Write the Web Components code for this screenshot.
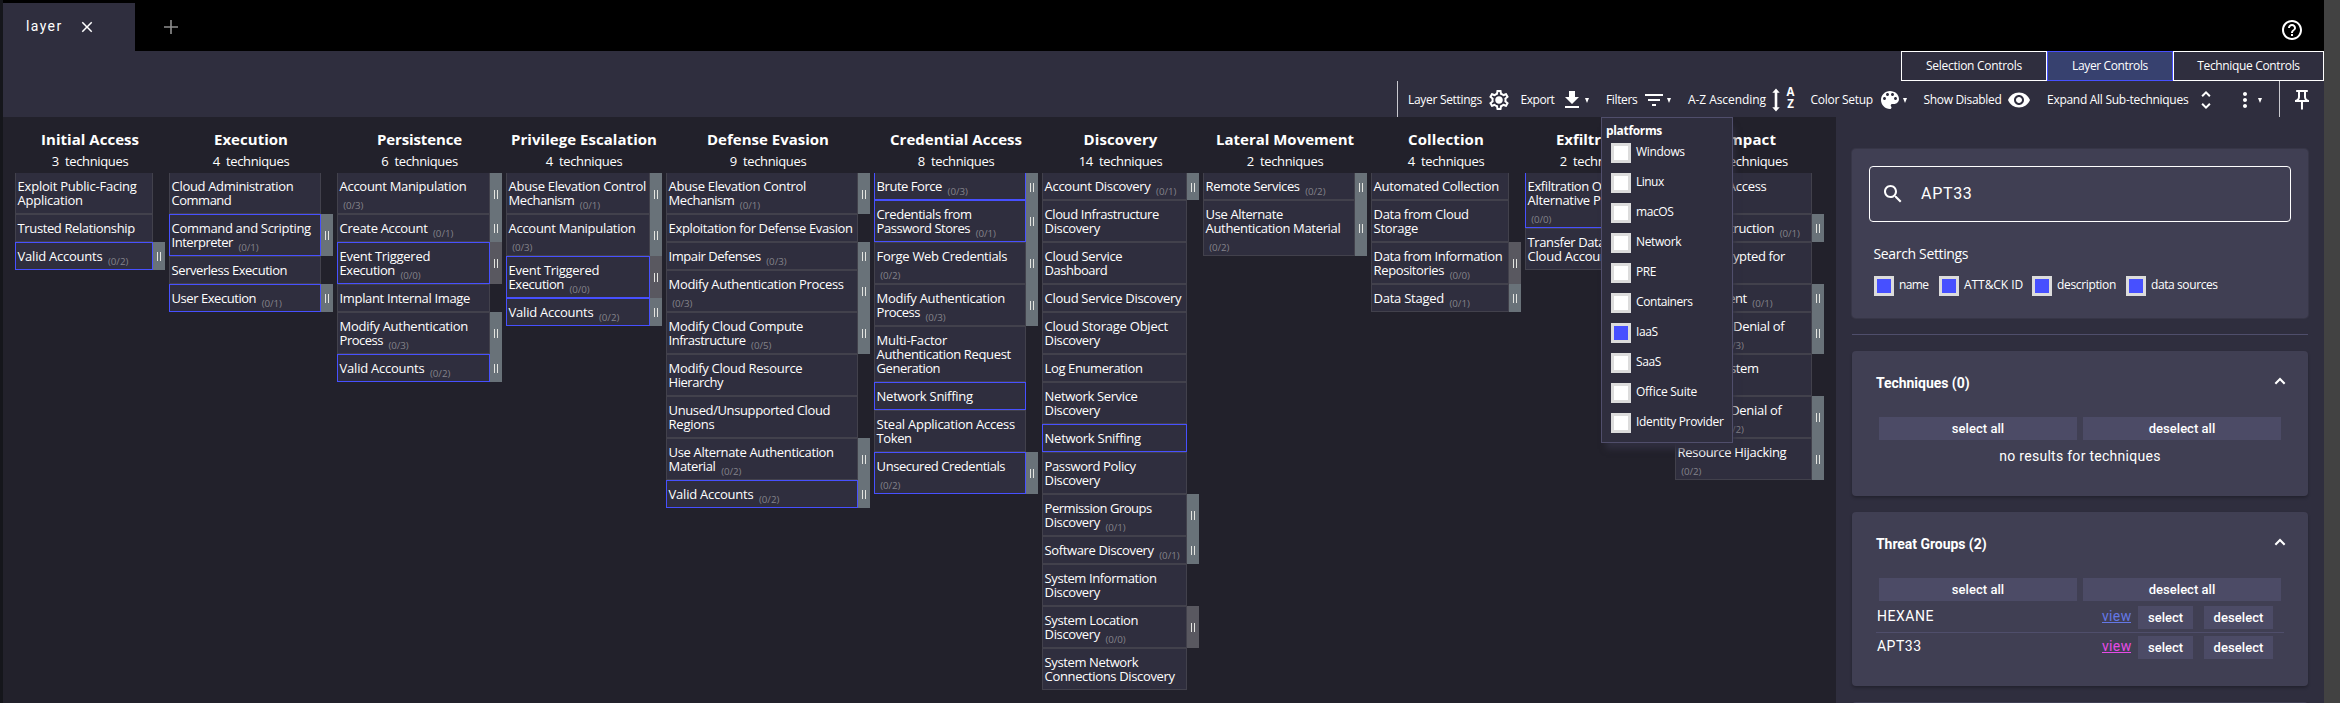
<!DOCTYPE html>
<html lang="en">
<head>
<meta charset="utf-8">
<title>ATT&amp;CK Navigator</title>
<style>
html,body{margin:0;height:703px;overflow:hidden;background:#22212b;color:#fff;font-family:"Open Sans","Noto Sans",sans-serif;font-size:13px}
</style>
</head>
<body>
<nav-app></nav-app>
<script>
const tpl = (html) => { const t = document.createElement('template'); t.innerHTML = html; return t; };
class Base extends HTMLElement {
  constructor() { super(); this.attachShadow({ mode: 'open' }); }
  connectedCallback() { this.shadowRoot.replaceChildren(tpl(this.render()).content.cloneNode(true)); }
  a(n, d = '') { return this.getAttribute(n) ?? d; }
}

/* Advance widths (units per 2048 em) of the interface typeface, used to space the labels. */
const ADV = {' ':561,a:1042,b:1204,c:946,d:1206,e:1071,f:641,g:1206,h:1158,i:496,j:496,k:1018,l:496,m:1764,n:1158,o:1200,p:1204,q:1206,r:712,s:869,t:694,u:1158,v:981,w:1480,x:940,y:990,z:926,A:1321,B:1174,C:1268,D:1436,E:1036,F:999,G:1406,H:1454,I:545,J:731,K:1188,L:963,M:1839,N:1532,O:1544,P:1147,Q:1544,R:1225,S:1087,T:1073,U:1407,V:1272,W:1913,X:1208,Y:1133,Z:1168,'(':618,')':618,'/':797,'-':819,'&':1638};
const ctx = document.createElement('canvas').getContext('2d');
/* <ui-text>: one line of text with even tracking; w = target width, size, weight, family. */
class UiText extends Base {
  render() {
    const text = this.textContent, size = +this.a('size', 13), weight = this.a('weight', '400');
    const fam = this.a('family', 'Open Sans');
    ctx.font = `${weight} ${size}px "${fam}"`;
    const want = this.hasAttribute('w') ? +this.a('w') : [...text].reduce((s, c) => s + (ADV[c] ?? 1104), 0) / 2048 * size;
    const ls = ((want - ctx.measureText(text).width) / text.length).toFixed(3);
    return `<style>:host{display:inline-block;white-space:pre;font:${weight} ${size}px/var(--lh,14px) "${fam}","Noto Sans",sans-serif;letter-spacing:${ls}px}</style><slot></slot>`;
  }
}
customElements.define('ui-text', UiText);

const ICONS = {
  settings: 'M19.43 12.98c.04-.32.07-.64.07-.98 0-.34-.03-.66-.07-.98l2.11-1.65c.19-.15.24-.42.12-.64l-2-3.46c-.09-.16-.26-.25-.44-.25-.06 0-.12.01-.17.03l-2.49 1c-.52-.4-1.08-.73-1.69-.98l-.38-2.65C14.46 2.18 14.25 2 14 2h-4c-.25 0-.46.18-.49.42l-.38 2.65c-.61.25-1.17.59-1.69.98l-2.49-1c-.06-.02-.12-.03-.18-.03-.17 0-.34.09-.43.25l-2 3.46c-.13.22-.07.49.12.64l2.11 1.65c-.04.32-.07.65-.07.98 0 .33.03.66.07.98l-2.11 1.65c-.19.15-.24.42-.12.64l2 3.46c.09.16.26.25.44.25.06 0 .12-.01.17-.03l2.49-1c.52.4 1.08.73 1.69.98l.38 2.65c.03.24.24.42.49.42h4c.25 0 .46-.18.49-.42l.38-2.65c.61-.25 1.17-.59 1.69-.98l2.49 1c.06.02.12.03.18.03.17 0 .34-.09.43-.25l2-3.46c.12-.22.07-.49-.12-.64l-2.11-1.65zm-1.98-1.71c.04.31.05.52.05.73 0 .21-.02.43-.05.73l-.14 1.13.89.7 1.08.84-.7 1.21-1.27-.51-1.04-.42-.9.68c-.43.32-.84.56-1.25.73l-1.06.43-.16 1.13-.2 1.35h-1.4l-.19-1.35-.16-1.13-1.06-.43c-.43-.18-.83-.41-1.23-.71l-.91-.7-1.06.43-1.27.51-.7-1.21 1.08-.84.89-.7-.14-1.13c-.03-.31-.05-.54-.05-.74s.02-.43.05-.73l.14-1.13-.89-.7-1.08-.84.7-1.21 1.27.51 1.04.42.9-.68c.43-.32.84-.56 1.25-.73l1.06-.43.16-1.13.2-1.35h1.39l.19 1.35.16 1.13 1.06.43c.43.18.83.41 1.23.71l.91.7 1.06-.43 1.27-.51.7 1.21-1.07.85-.89.7.14 1.13zM12 8.200c-2.100 0-3.800 1.700-3.800 3.800s1.700 3.800 3.800 3.800 3.800-1.700 3.800-3.800-1.700-3.800-3.800-3.800z',
  download: 'M19 9h-4V3H9v6H5l7 7 7-7zM5 18v2h14v-2H5z',
  filter: 'M10 18h4v-2h-4v2zM3 6v2h18V6H3zm3 7h12v-2H6v2z',
  palette: 'M12 3c-4.97 0-9 4.03-9 9s4.03 9 9 9c.83 0 1.5-.67 1.5-1.5 0-.39-.15-.74-.39-1.01-.23-.26-.38-.61-.38-.99 0-.83.67-1.5 1.5-1.5H16c2.76 0 5-2.24 5-5 0-4.42-4.03-8-9-8zm-5.5 9c-.83 0-1.5-.67-1.5-1.5S5.67 9 6.5 9 8 9.67 8 10.5 7.33 12 6.5 12zm3-4C8.67 8 8 7.33 8 6.5S8.67 5 9.5 5s1.5.67 1.5 1.5S10.33 8 9.5 8zm5 0c-.83 0-1.5-.67-1.5-1.5S13.67 5 14.5 5s1.5.67 1.5 1.5S15.33 8 14.5 8zm3 4c-.83 0-1.5-.67-1.5-1.5S16.67 9 17.5 9s1.5.67 1.5 1.5-.67 1.5-1.5 1.5z',
  eye: 'M12 4.5C7 4.5 2.73 7.61 1 12c1.73 4.39 6 7.5 11 7.5s9.27-3.11 11-7.5c-1.73-4.39-6-7.5-11-7.5zM12 17c-2.76 0-5-2.24-5-5s2.24-5 5-5 5 2.24 5 5-2.24 5-5 5zm0-8c-1.66 0-3 1.34-3 3s1.34 3 3 3 3-1.34 3-3-1.34-3-3-3z',
  unfold: 'M12 5.83L15.17 9l1.41-1.41L12 3 7.41 7.59 8.83 9 12 5.83zm0 12.34L8.83 15l-1.41 1.41L12 21l4.59-4.59L15.17 15 12 18.17z',
  more: 'M12 8c1.1 0 2-.9 2-2s-.9-2-2-2-2 .9-2 2 .9 2 2 2zm0 2c-1.1 0-2 .9-2 2s.9 2 2 2 2-.9 2-2-.9-2-2-2zm0 6c-1.1 0-2 .9-2 2s.9 2 2 2 2-.9 2-2-.9-2-2-2z',
  pin: 'M14 4v5c0 1.12.37 2.16 1 3H9c.65-.86 1-1.9 1-3V4h4m3-2H7c-.55 0-1 .45-1 1s.45 1 1 1h1v5c0 1.66-1.34 3-3 3v2h5.97v7l1 1 1-1v-7H19v-2c-1.66 0-3-1.34-3-3V4h1c.55 0 1-.45 1-1s-.45-1-1-1z',
  help: 'M11 18h2v-2h-2v2zm1-16C6.48 2 2 6.48 2 12s4.48 10 10 10 10-4.48 10-10S17.52 2 12 2zm0 18c-4.41 0-8-3.59-8-8s3.59-8 8-8 8 3.59 8 8-3.59 8-8 8zm0-14c-2.21 0-4 1.79-4 4h2c0-1.1.9-2 2-2s2 .9 2 2c0 2-3 1.75-3 5h2c0-2.25 3-2.5 3-5 0-2.21-1.79-4-4-4z',
  search: 'M15.5 14h-.79l-.28-.27C15.41 12.59 16 11.11 16 9.5 16 5.91 13.09 3 9.5 3S3 5.91 3 9.5 5.91 16 9.5 16c1.61 0 3.09-.59 4.23-1.57l.27.28v.79l5 4.99L20.49 19l-4.99-5zm-6 0C7.01 14 5 11.99 5 9.5S7.01 5 9.5 5 14 7.01 14 9.5 11.99 14 9.5 14z',
  close: 'M19 6.41 17.59 5 12 10.59 6.41 5 5 6.41 10.59 12 5 17.59 6.41 19 12 13.41 17.59 19 19 17.59 13.41 12z',
  plus: 'M11.2 5h1.6v6.2H19v1.6h-6.2V19h-1.6v-6.2H5v-1.6h6.2z',
  chevron: 'M12 8.5l-5.4 5.4 1.5 1.5 3.9-3.9 3.9 3.9 1.5-1.5z',
  updown: 'M12 .5l3.7 4.2h-2.4v14.6h2.4L12 23.5l-3.7-4.2h2.4V4.7H8.3z'
};
class UiIcon extends Base {
  render() {
    const s = this.a('size', 24), n = this.a('name');
    return `<style>:host{display:block;width:${s}px;height:${s}px}svg{display:block;fill:currentColor}</style><svg width="${s}" height="${s}" viewBox="0 0 24 24"><path d="${ICONS[n]}"/></svg>`;
  }
}
customElements.define('ui-icon', UiIcon);

class UiCheck extends Base {
  render() {
    return `<style>:host{display:flex;align-items:flex-start}i{box-sizing:border-box;width:20px;height:20px;border:3px solid #dcdcdc;background:${this.hasAttribute('on') ? '#4750ff' : '#fff'};margin-right:5px}ui-text{--lh:16px;margin-top:var(--dy,1px)}</style><i></i><ui-text size="12">${this.a('label').replace('&', '&amp;')}</ui-text>`;
  }
}
customElements.define('ui-check', UiCheck);

class TechniqueCell extends Base {
  render() {
    const lines = this.a('lines').split('|'), n = this.a('n'), own = this.hasAttribute('own');
    const h = 14 * (lines.length + (own ? 1 : 0)) + 14;
    const sub = n ? `<ui-text class="n" size="9.75">(0/${n})</ui-text>` : '';
    const body = lines.map((l, i) => `<div><ui-text>${l}</ui-text>${!own && i === lines.length - 1 ? sub : ''}</div>`).join('') + (own ? `<div class="own">${sub}</div>` : '');
    return `<style>
      :host{display:flex;height:${h}px}
      .c{box-sizing:border-box;width:var(--cw);height:100%;border:1px solid #42414c;background:#2f2e3e;padding:6px 0 0 1.6px}
      :host([hit]) .c{border-color:#4750ff}
      :host([first]){height:${h - 1}px;margin-top:1px}
      :host([first]) .c{border-top:0}
      .c>div{height:14px;display:flex}
      .n{color:#84838a;margin-left:5.6px;position:relative;top:6px}
      .own .n{margin-left:3.6px}
      .h{width:12px;display:flex;align-items:center;justify-content:center;background:${n === '0' ? '#595860' : '#697279'}}
      .h i{width:2px;height:9px;border:solid #e3e4e0;border-width:0 1px;margin-top:1px}
    </style><div class="c">${body}</div>${n ? '<div class="h"><i></i></div>' : ''}`;
  }
}
customElements.define('technique-cell', TechniqueCell);

/* cells: [lines separated by |, sub-technique count, flags: h = highlighted, o = count on its own line] */
const COLUMNS = [
  { name: 'Initial Access', w: 138, tw: 97, cells: [['Exploit Public-Facing|Application'], ['Trusted Relationship'], ['Valid Accounts', 2, 'h']] },
  { name: 'Execution', w: 152, tw: 73, cells: [['Cloud Administration|Command'], ['Command and Scripting|Interpreter', 1, 'h'], ['Serverless Execution'], ['User Execution', 1, 'h']] },
  { name: 'Persistence', w: 153, tw: 84, cells: [['Account Manipulation', 3, 'o'], ['Create Account', 1], ['Event Triggered|Execution', 0, 'h'], ['Implant Internal Image'], ['Modify Authentication|Process', 3], ['Valid Accounts', 2, 'h']] },
  { name: 'Privilege Escalation', w: 144, tw: 145, cells: [['Abuse Elevation Control|Mechanism', 1], ['Account Manipulation', 3, 'o'], ['Event Triggered|Execution', 0, 'h'], ['Valid Accounts', 2, 'h']] },
  { name: 'Defense Evasion', w: 192, tw: 121, cells: [['Abuse Elevation Control|Mechanism', 1], ['Exploitation for Defense Evasion'], ['Impair Defenses', 3], ['Modify Authentication Process', 3, 'o'], ['Modify Cloud Compute|Infrastructure', 5], ['Modify Cloud Resource|Hierarchy'], ['Unused/Unsupported Cloud|Regions'], ['Use Alternate Authentication|Material', 2], ['Valid Accounts', 2, 'h']] },
  { name: 'Credential Access', w: 152, tw: 131, cells: [['Brute Force', 3, 'h'], ['Credentials from|Password Stores', 1, 'h'], ['Forge Web Credentials', 2, 'o'], ['Modify Authentication|Process', 3], ['Multi-Factor|Authentication Request|Generation'], ['Network Sniffing', null, 'h'], ['Steal Application Access|Token'], ['Unsecured Credentials', 2, 'ho']] },
  { name: 'Discovery', w: 145, tw: 73, cells: [['Account Discovery', 1], ['Cloud Infrastructure|Discovery'], ['Cloud Service|Dashboard'], ['Cloud Service Discovery'], ['Cloud Storage Object|Discovery'], ['Log Enumeration'], ['Network Service|Discovery'], ['Network Sniffing', null, 'h'], ['Password Policy|Discovery'], ['Permission Groups|Discovery', 1], ['Software Discovery', 1], ['System Information|Discovery'], ['System Location|Discovery', 0], ['System Network|Connections Discovery']] },
  { name: 'Lateral Movement', w: 152, tw: 137, cells: [['Remote Services', 2], ['Use Alternate|Authentication Material', 2, 'o']] },
  { name: 'Collection', w: 138, tw: 75, cells: [['Automated Collection'], ['Data from Cloud|Storage'], ['Data from Information|Repositories', 0], ['Data Staged', 1]] },
  { name: 'Exfiltration', w: 134, tw: 83, cells: [['Exfiltration Over|Alternative Protocol', 0, 'ho'], ['Transfer Data to|Cloud Account']] },
  { name: 'Impact', w: 137, tw: 52, cells: [['Account Access|Removal'], ['Data Destruction', 1], ['Data Encrypted for|Impact'], ['Defacement', 1], ['Endpoint Denial of|Service', 3], ['Inhibit System|Recovery'], ['Network Denial of|Service', 2], ['Resource Hijacking', 2, 'o']] }
];
class TacticColumn extends Base {
  render() {
    const d = COLUMNS[+this.a('index')];
    return `<style>
      :host{display:block;--cw:${d.w}px;width:${d.w + 12}px;flex:none}
      header{height:55px;display:flex;flex-direction:column;align-items:center}
      .t{--lh:20px;margin-top:12px}.k{margin-top:5px}
    </style><header><ui-text class="t" weight="700" size="15" w="${d.tw + 1}">${d.name}</ui-text><ui-text class="k">${d.cells.length}  techniques</ui-text></header>` +
      d.cells.map(([l, n, f = ''], i) => `<technique-cell lines="${l}" ${n === undefined || n === null ? '' : `n="${n}"`} ${f.includes('h') ? 'hit' : ''} ${f.includes('o') ? 'own' : ''} ${i ? '' : 'first'}></technique-cell>`).join('');
  }
}
customElements.define('tactic-column', TacticColumn);

class TechniqueMatrix extends Base {
  render() {
    return `<style>:host{display:flex;gap:4px;padding-left:12px;overflow:hidden;background:#22212b}</style>` +
      COLUMNS.map((_, i) => `<tactic-column index="${i}"></tactic-column>`).join('');
  }
}
customElements.define('technique-matrix', TechniqueMatrix);

class TabStrip extends Base {
  render() {
    return `<style>:host{display:flex;height:51px;background:#000}
      .tab{box-sizing:border-box;width:132px;margin-top:3px;background:#2f2e3e;display:flex;padding:15px 0 0 23px}
      .tab ui-text{width:36px;--lh:16px}
      .tab ui-icon{margin:0 0 0 16px}
      .plus{color:#8f8f8f;margin:15px 0 0 24px}
      .help{margin:18px 20px 0 auto}</style>
      <div class="tab"><ui-text family="Roboto" size="14" w="36.5">layer</ui-text><ui-icon name="close" size="18"></ui-icon></div>
      <ui-icon class="plus" name="plus" size="24"></ui-icon>
      <ui-icon class="help" name="help"></ui-icon>`;
  }
}
customElements.define('tab-strip', TabStrip);

class TabButtons extends Base {
  render() {
    return `<style>:host{display:flex;justify-content:flex-end;height:30px}
      div{box-sizing:border-box;border:1px solid #fff;display:flex;align-items:center;justify-content:center}
      .on{border-color:#4750ff;background:#37416f}ui-text{--lh:16px}</style>
      <div style="width:146px"><ui-text size="12">Selection Controls</ui-text></div>
      <div class="on" style="width:126px"><ui-text size="12">Layer Controls</ui-text></div>
      <div style="width:151px"><ui-text size="12">Technique Controls</ui-text></div>`;
  }
}
customElements.define('tab-buttons', TabButtons);

class ToolBar extends Base {
  render() {
    const t = (s) => `<ui-text size="12">${s}</ui-text>`, i = (n) => `<ui-icon name="${n}"></ui-icon>`, c = '<b></b>';
    const items = [[1397, '<hr>'], [1408, t('Layer Settings')], [1487, i('settings')], [1520.5, t('Export')], [1560, i('download')], [1584.5, c],
      [1606, t('Filters')], [1642, i('filter')], [1666.5, c], [1688, t('A-Z Ascending')], [1764, i('updown')], [1786, '<div class="az"><span>A</span><span>Z</span></div>'],
      [1810.5, t('Color Setup')], [1878, i('palette')], [1902.7, c], [1923.5, t('Show Disabled')], [2007, i('eye')], [2047, t('Expand All Sub-techniques')],
      [2193.5, i('unfold')], [2233, i('more')], [2257.7, c], [2279, '<hr>'], [2290, i('pin')], [2324, '']];
    const cols = items.slice(1).map((x, k) => (x[0] - items[k][0]).toFixed(2) + 'px').join(' ');
    return `<style>:host{display:grid;grid-template-columns:${cols};justify-content:end;align-items:center;height:34px;padding-top:2px}
      ui-text{--lh:16px;display:block}
      b{display:block;width:0;height:0;border:2.8px solid transparent;border-top:5.4px solid #fff;border-bottom:0;margin-top:1px}
      hr{width:1px;height:36px;background:#c9c9cf;border:0;margin:-2px 0 0}
      .az{display:flex;flex-direction:column;font:700 11.5px/12px "Open Sans",sans-serif;margin-top:-4px;width:9px;align-items:center}
      </style>` + items.slice(0, -1).map((x) => `<div>${x[1]}</div>`).join('');
  }
}
customElements.define('tool-bar', ToolBar);

class FilterMenu extends Base {
  render() {
    const names = ['Windows', 'Linux', 'macOS', 'Network', 'PRE', 'Containers', 'IaaS', 'SaaS', 'Office Suite', 'Identity Provider'];
    return `<style>:host{position:absolute;left:1601px;top:117px;box-sizing:border-box;width:132px;height:326px;background:#2f2e3e;border:1px solid #504e6b;padding:5px 0 0 4px;box-shadow:3px 8px 6px -2px #2f2e3e}
      .p{--lh:16px;display:block;margin-bottom:4px}
      ui-check{height:30px;margin-left:5px}</style>
      <ui-text class="p" weight="700" size="12" w="56">platforms</ui-text>` +
      names.map((n) => `<ui-check label="${n}" ${n === 'IaaS' ? 'on' : ''}></ui-check>`).join('');
  }
}
customElements.define('filter-menu', FilterMenu);

class UiButton extends Base {
  render() {
    return `<style>:host{display:flex;height:23px;align-items:center;justify-content:center;background:#4c4b66;box-sizing:border-box}ui-text{--lh:18px}</style><ui-text family="Roboto" weight="500" size="13" w="${this.a('tw')}">${this.a('label')}</ui-text>`;
  }
}
customElements.define('ui-button', UiButton);

class ResultPanel extends Base {
  render() {
    const css = `<style>:host{display:block;background:#403f53;border-radius:4px;box-shadow:0 2px 3px rgba(0,0,0,.25);box-sizing:border-box;height:var(--h);margin-bottom:16px}
      header{height:64px;box-sizing:border-box;padding:23px 16px 0 24px;display:flex;justify-content:space-between}
      header ui-text{--lh:18px}
      header ui-icon{margin-top:-5px}
      .all{display:grid;grid-template-columns:198px 198px;gap:6px;padding:2px 0 0 27px}</style>`;
    if (!this.a('label')) return css;
    return css + `<header><ui-text family="Roboto" weight="700" size="14" w="${this.a('tw')}">${this.a('label')}</ui-text><ui-icon name="chevron"></ui-icon></header>
      <div class="all"><ui-button label="select all" tw="52.5"></ui-button><ui-button label="deselect all" tw="66.5"></ui-button></div>
      <slot></slot>`;
  }
}
customElements.define('result-panel', ResultPanel);

class ResultRow extends Base {
  render() {
    return `<style>:host{display:flex;height:30px;box-sizing:border-box;margin:0 24px;padding-left:1px;--lh:18px}
      :host([line]){border-bottom:1px solid #4f4e6b}
      .name{width:225px;flex:none;padding-top:4px}
      .view{color:${this.a('color')};border-bottom:1px solid;height:15px;flex:none;margin-top:4px;width:29px}
      .s{width:55px;margin:3px 11px 0 7px}.d{width:69px;margin-top:3px}</style>
      <div class="name"><ui-text family="Roboto" size="14" w="${this.a('tw')}">${this.a('label')}</ui-text></div>
      <div class="view"><ui-text family="Roboto" size="14" w="29.5">view</ui-text></div>
      <ui-button class="s" label="select" tw="35"></ui-button><ui-button class="d" label="deselect" tw="50"></ui-button>`;
  }
}
customElements.define('result-row', ResultRow);

class SideBar extends Base {
  render() {
    return `<style>:host{display:block;background:#2f2e3e;padding:32px 16px 0;box-sizing:border-box;width:488px;overflow:hidden}
      .search{box-sizing:border-box;height:169px;background:#403f53;border-radius:4px;padding:17px;box-shadow:0 0 1px 1px #393849}
      .box{box-sizing:border-box;height:56px;border:1px solid #fff;border-radius:4px;display:flex;padding:15px 0 0 11px}
      .box ui-text{--lh:20px;margin:2px 0 0 16px}
      .set{--lh:18px;display:block;margin:23px 0 0 4.5px}
      .checks{display:grid;grid-template-columns:65px 93px 94px 110px;margin:13px 0 0 5px;--dy:.5px}
      .rule{height:1px;background:#4f4e6b;margin:16px 0}
      .none{text-align:center;--lh:18px;margin-top:7px}
      .rows{padding-top:2px}</style>
      <div class="search"><div class="box"><ui-icon name="search"></ui-icon><ui-text family="Roboto" size="16" w="51.5">APT33</ui-text></div>
      <ui-text class="set" size="14">Search Settings</ui-text>
      <div class="checks"><ui-check on label="name"></ui-check><ui-check on label="ATT&amp;CK ID"></ui-check><ui-check on label="description"></ui-check><ui-check on label="data sources"></ui-check></div></div>
      <div class="rule"></div>
      <result-panel style="--h:145px" label="Techniques (0)" tw="93.5"><div class="none"><ui-text family="Roboto" size="14" w="161.5">no results for techniques</ui-text></div></result-panel>
      <result-panel style="--h:174px" label="Threat Groups (2)" tw="110.5"><div class="rows"><result-row line label="HEXANE" tw="57" color="#6478e6"></result-row><result-row label="APT33" tw="44.5" color="#e64be6"></result-row></div></result-panel>
      <result-panel style="--h:145px"></result-panel>`;
  }
}
customElements.define('side-bar', SideBar);

class NavApp extends Base {
  render() {
    return `<style>:host{display:grid;grid-template-columns:3px 2321px 16px;height:703px;width:2340px;overflow:hidden;position:relative}
      .edge{background:#15161b}.scroll{background:#424242}
      main{display:grid;grid-template-rows:51px 66px 586px}
      .bar{background:#2f2e3e}
      .body{display:grid;grid-template-columns:1833px 488px;overflow:hidden}</style>
      <div class="edge"></div>
      <main><tab-strip></tab-strip><div class="bar"><tab-buttons></tab-buttons><tool-bar></tool-bar></div>
      <div class="body"><technique-matrix></technique-matrix><side-bar></side-bar></div></main>
      <div class="scroll"></div><filter-menu></filter-menu>`;
  }
}
customElements.define('nav-app', NavApp);
</script>
</body>
</html>
